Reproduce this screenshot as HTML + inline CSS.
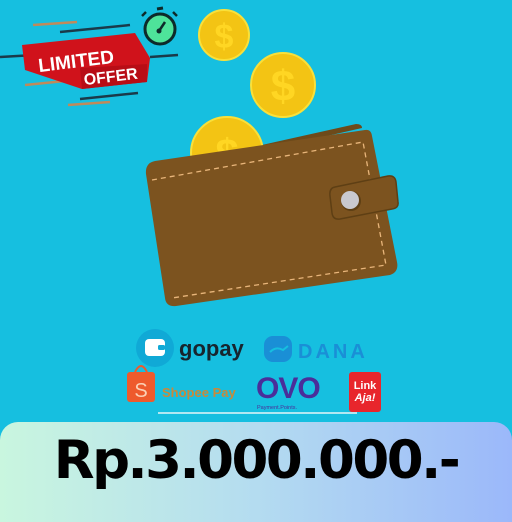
<!DOCTYPE html>
<html><head><meta charset="utf-8"><style>
html,body{margin:0;padding:0}
body{width:512px;height:512px;background:#16bfe0;position:relative;overflow:hidden;font-family:"Liberation Sans",sans-serif}
.panel{position:absolute;left:0;top:422px;width:512px;height:100px;border-radius:18px 18px 0 0;background:linear-gradient(90deg,#c9f6df,#b4dcf0 50%,#9bb8fa)}
.price{position:absolute;left:0;width:512px;top:430px;text-align:center;font:bold 53px "DejaVu Sans","Liberation Sans",sans-serif;letter-spacing:-2.5px;color:#000}
</style></head><body>
<svg width="512" height="430" style="position:absolute;left:0;top:0">
<line x1="33" y1="25" x2="77" y2="22" stroke="#c08a5a" stroke-width="2.5"/>
<line x1="60" y1="32" x2="130" y2="25" stroke="#1a3a4a" stroke-width="2.5"/>
<line x1="0" y1="57" x2="35" y2="55" stroke="#1a3a4a" stroke-width="2.5"/>
<line x1="150" y1="57" x2="178" y2="55" stroke="#1a3a4a" stroke-width="2.5"/>
<line x1="25" y1="85" x2="75" y2="80" stroke="#c08a5a" stroke-width="2.5"/>
<line x1="80" y1="99" x2="138" y2="93" stroke="#1a3a4a" stroke-width="2.5"/>
<line x1="68" y1="105" x2="110" y2="102" stroke="#c08a5a" stroke-width="2.5"/>
<polygon points="22,45 135,33 150,58 147,82 82,89 25,70" fill="#d0121b"/>
<polygon points="80,68 147,64 147,82 82,89" fill="#b80d16"/>
<text x="38" y="67" transform="rotate(-7 80 60)" font-family="Liberation Sans" font-weight="bold" font-size="19" fill="#fff">LIMITED</text>
<text x="84" y="82" transform="rotate(-7 110 80)" font-family="Liberation Sans" font-weight="bold" font-size="16" fill="#fff">OFFER</text>
<circle cx="160" cy="29" r="15" fill="#4ee39a" stroke="#0d2a2a" stroke-width="3"/>
<line x1="157" y1="9" x2="163" y2="8" stroke="#0d2a2a" stroke-width="3"/>
<line x1="146" y1="12" x2="142" y2="16" stroke="#0d2a2a" stroke-width="2.5"/>
<line x1="173" y1="12" x2="177" y2="16" stroke="#0d2a2a" stroke-width="2.5"/>
<line x1="159" y1="31" x2="165" y2="22" stroke="#0d2a2a" stroke-width="2.5"/>
<circle cx="159" cy="31" r="2.5" fill="#0d2a2a"/>
<g font-family="Liberation Sans" font-weight="bold" text-anchor="middle">
<circle cx="224" cy="35" r="25" fill="#f3c414" stroke="#f9e03a" stroke-width="2"/>
<text x="224" y="48" font-size="34" fill="#ffd623">$</text>
<circle cx="283" cy="85" r="32" fill="#f3c414" stroke="#f9e03a" stroke-width="2"/>
<text x="283" y="101" font-size="44" fill="#ffd623">$</text>
</g>
<path d="M150 170 L356 124 Q362 124 362 128 L160 174 Z" fill="#6d4a1a"/>
<circle cx="227" cy="153" r="36" fill="#f3c414" stroke="#f9e03a" stroke-width="2"/>
<text x="227" y="168" font-family="Liberation Sans" font-weight="bold" font-size="42" fill="#ffd623" text-anchor="middle">$</text>
<path d="M150 163 Q145 168 148 175 L369 140 L368 133 Z" fill="#5e3f14"/>
<path d="M155 161 L365 130 Q371 129 372 136 L397 262 Q399 272 390 275 L176 306 Q166 307 165 298 L146 174 Q145 163 155 161 Z" fill="#7c531f"/>
<path d="M152 180 L363 142 L386 265 L172 298" fill="none" stroke="#e8b57a" stroke-width="1.3" stroke-dasharray="5 4"/>
<path d="M335 187 L388 176 Q395 175 396 182 L398 202 Q399 208 392 209 L340 219 Q333 220 332 213 L330 196 Q329 188 335 187Z" fill="#7c531f" stroke="#5e3f14" stroke-width="1.5"/>
<circle cx="351" cy="201" r="10" fill="#5e3f14"/>
<circle cx="350" cy="200" r="9" fill="#c9c9cf"/>
<circle cx="155" cy="348" r="19" fill="#10a9d6"/>
<rect x="145" y="339" width="20" height="17" rx="4" fill="#fff"/>
<rect x="158" y="345" width="7" height="5" rx="1.5" fill="#10a9d6"/>
<text x="179" y="356" font-family="Liberation Sans" font-weight="bold" font-size="22" fill="#17252e">gopay</text>
<rect x="264" y="336" width="28" height="26" rx="9" fill="#1a8fd6"/>
<path d="M270 352 Q276 346 283 350 Q288 346 288 346" stroke="#16bfe0" stroke-width="2" fill="none"/>
<text x="298" y="358" font-family="Liberation Sans" font-weight="bold" font-size="20" letter-spacing="3" fill="#1a8fd6">DANA</text>
<rect x="127" y="372" width="28" height="30" rx="3" fill="#ee5a2c"/>
<path d="M135 372 Q141 360 147 372" stroke="#ee5a2c" stroke-width="2" fill="none"/>
<text x="141" y="397" font-family="Liberation Sans" font-size="20" fill="#fbd0b5" text-anchor="middle">S</text>
<text x="162" y="397" font-family="Liberation Sans" font-weight="bold" font-size="13" fill="#c9893a">Shopee Pay</text>
<text x="256" y="398" font-family="Liberation Sans" font-weight="bold" font-size="30" fill="#4a2e9a" letter-spacing="-1">OVO</text>
<text x="257" y="409" font-family="Liberation Sans" font-size="5.5" fill="#4a2e9a">Payment.Points.</text>
<line x1="158" y1="413" x2="357" y2="413" stroke="#e6f5f8" stroke-width="1.5"/>
<rect x="349" y="372" width="32" height="40" rx="3" fill="#e8262c"/>
<text x="365" y="389" font-family="Liberation Sans" font-weight="bold" font-size="11" fill="#fff" text-anchor="middle">Link</text>
<text x="365" y="401" font-family="Liberation Sans" font-weight="bold" font-style="italic" font-size="11" fill="#fff" text-anchor="middle">Aja!</text>
</svg>
<div class="panel"></div>
<div class="price">Rp.3.000.000.-</div>
</body></html>
